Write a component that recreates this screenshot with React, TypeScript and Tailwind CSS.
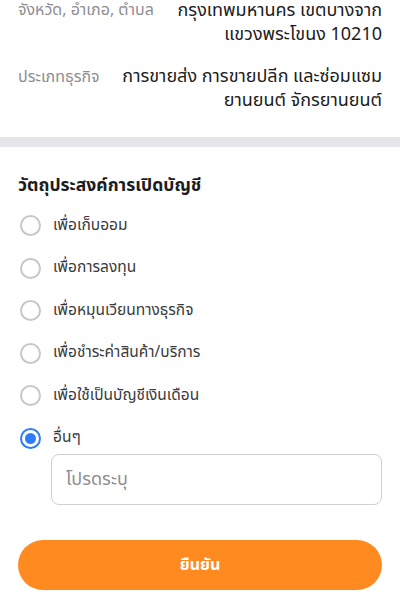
import React, { useState } from 'react';

const purposes = [
  'เพื่อเก็บออม',
  'เพื่อการลงทุน',
  'เพื่อหมุนเวียนทางธุรกิจ',
  'เพื่อชำระค่าสินค้า/บริการ',
  'เพื่อใช้เป็นบัญชีเงินเดือน',
  'อื่นๆ',
];

const Radio = ({ checked }: { checked: boolean }) =>
  checked ? (
    <span className="flex h-[21px] w-[21px] shrink-0 items-center justify-center rounded-full border-[2.5px] border-[#2f7df6]">
      <span className="h-[11px] w-[11px] rounded-full bg-[#2f7df6]" />
    </span>
  ) : (
    <span className="h-[21px] w-[21px] shrink-0 rounded-full border-2 border-[#c7c7cc]" />
  );

export default function App() {
  const [selected, setSelected] = useState(5);

  return (
    <div
      className="h-[600px] w-[400px] overflow-hidden bg-white"
      style={{ fontFamily: '"Noto Sans Thai", "Noto Sans", "Liberation Sans", sans-serif' }}
    >
      <div className="-mt-[1px] flex flex-col gap-[19px] px-[18px]">
        <div className="flex justify-between leading-[23.5px]">
          <span className="text-[16px] text-[#8e8e93]">จังหวัด, อำเภอ, ตำบล</span>
          <span className="text-right text-[18px] text-[#1c1c1e]">
            กรุงเทพมหานคร เขตบางจาก
            <br />
            แขวงพระโขนง 10210
          </span>
        </div>
        <div className="flex justify-between leading-[24px]">
          <span className="text-[16px] text-[#8e8e93]">ประเภทธุรกิจ</span>
          <span className="text-right text-[18px] text-[#1c1c1e]">
            การขายส่ง การขายปลีก และซ่อมแซม
            <br />
            ยานยนต์ จักรยานยนต์
          </span>
        </div>
      </div>

      <div className="mt-[24px] h-[10px] bg-[#e5e5ea]" />

      <div className="px-[18px] pt-[27px]">
        <h2 className="text-[17.5px] font-bold leading-[24px] text-[#1c1c1e]">วัตถุประสงค์การเปิดบัญชี</h2>

        <div className="mt-[17px] flex flex-col gap-[21.5px]">
          {purposes.map((p, i) => (
            <button
              key={p}
              onClick={() => setSelected(i)}
              className="flex h-[21px] items-center gap-[12px] pl-[2px] text-left"
            >
              <Radio checked={selected === i} />
              <span className="text-[15.5px] text-[#3a3a3c]">{p}</span>
            </button>
          ))}
        </div>

        <div className="ml-[33px] mt-[5px]">
          <input
            placeholder="โปรดระบุ"
            className="h-[51px] w-full rounded-[8px] border border-[#cfcfd4] px-[14px] text-[18px] text-[#1c1c1e] outline-none placeholder:text-[#8e8e93]"
          />
        </div>

        <button className="mt-[35px] flex h-[50px] w-full items-center justify-center rounded-full bg-[#ff8a1f] text-[16px] font-bold text-white">
          ยืนยัน
        </button>
      </div>
    </div>
  );
}
